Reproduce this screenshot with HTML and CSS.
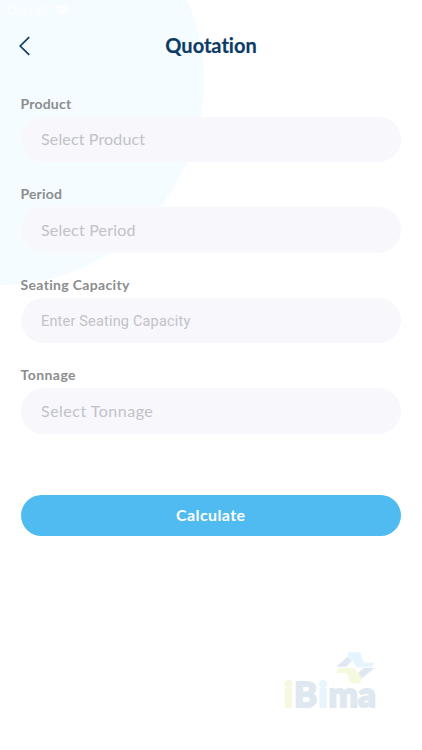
FILE: index.html
```html
<!DOCTYPE html>
<html lang="en">
<head>
<meta charset="utf-8">
<title>Quotation</title>
<link rel="stylesheet" href="styles.css">
</head>
<body>
<main class="screen">
  <div class="status"><span>Carrier</span>
    <svg width="16" height="12" viewBox="0 0 16 12"><path d="M1 4Q8-2 15 4L13 6Q8 2 3 6ZM4 7Q8 4 12 7L8 11Z" fill="currentColor"/></svg>
  </div>
  <header class="header">
    <svg class="back" width="12" height="20" viewBox="0 0 12 20"><path d="M10.2 1.2L1.2 10L10.2 18.8" fill="none" stroke="currentColor" stroke-width="1.7"/></svg>
    <h1 class="title">Quotation</h1>
  </header>
  <form class="form">
    <div class="field"><div class="label product">Product</div><div class="input"><span class="select-product">Select Product</span></div></div>
    <div class="field"><div class="label period">Period</div><div class="input"><span class="select-period">Select Period</span></div></div>
    <div class="field"><div class="label seating">Seating Capacity</div><div class="input entry"><span>Enter Seating Capacity</span></div></div>
    <div class="field"><div class="label tonnage">Tonnage</div><div class="input"><span class="select-tonnage">Select Tonnage</span></div></div>
    <button class="calculate" type="button">Calculate</button>
  </form>
  <footer class="brand">
    <svg class="mark" width="42" height="35" viewBox="195 30 126 105">
      <path d="M234 37H270L283 68H314L305 82H260L246 61L234 52Z" fill="#e6f5fd"/>
      <path d="M199 80L232 50L246 62L228 80Z" fill="#dfe8f0"/>
      <path d="M204 84H252L266 101L277 115L270 130H242L230 99H199Z" fill="#f6f8e0"/>
      <path d="M264 99L281 84H314L276 115Z" fill="#dfe8f0"/>
    </svg>
    <div class="wordmark"><span class="yellow">i</span><span class="cap">B</span><span class="sky">i</span><span class="end">ma</span></div>
  </footer>
</main>
</body>
</html>
```
FILE: styles.css
```css
* { box-sizing: border-box; }
body { margin: 0; background: #fff; font-family: Lato, "Liberation Sans", sans-serif; font-variant-ligatures: none; }
.screen {
  width: 422px; height: 750px; overflow: hidden;
  background: radial-gradient(circle at 0 81px, #f5fcff 203.5px, #fff 204.5px);
}
.status { height: 20px; padding-left: 7px; display: flex; align-items: center; gap: 4px; color: #fdfeff; font: 13px/20px Inter, sans-serif; }
.header { height: 52px; display: grid; grid-template-columns: 41px 340px 41px; align-items: center; color: #0b3b66; }
.back { margin-left: 18.5px; }
.title { margin: -2px 0 0; text-align: center; font-size: 20px; line-height: 24px; font-weight: 700; -webkit-text-stroke: 0.2px currentColor; }
.form { padding: 22.5px 21px 0 20.5px; }
.field { height: 90.6px; }
.label { height: 22px; line-height: 17px; font-size: 14px; font-weight: 700; color: #8b8d8e; white-space: nowrap; }
.product { letter-spacing: 0.2px; }
.period { letter-spacing: 0.15px; }
.seating { letter-spacing: 0.33px; }
.tonnage { line-height: 18px; letter-spacing: 0.45px; }
.input { height: 45.5px; border-radius: 23px; background: #f7f7fc; padding: 0 20.5px 1px; display: flex; align-items: center; color: #c2c2c8; font-size: 16px; white-space: nowrap; }
.select-product { letter-spacing: 0.15px; }
.select-period { letter-spacing: 0.2px; }
.select-tonnage { letter-spacing: 0.5px; }
.entry { padding-bottom: 0; padding-top: 2px; font-family: Roboto, sans-serif; font-size: 14.5px; letter-spacing: 0.18px; }
.calculate { display: block; width: 100%; height: 41px; margin-top: 38px; padding: 0; border: 0; border-radius: 21px; background: #4fbbf1; color: #fff; font: 700 16px/20px Lato, sans-serif; letter-spacing: 0.4px; }
.brand { width: 94px; margin: 114.5px 0 0 284px; }
.mark { display: block; margin-left: 51px; }
.wordmark { display: flex; height: 34px; margin-top: -9px; line-height: 34px; font-size: 35px; font-weight: 900; color: #dfe8f0; -webkit-text-stroke: 2px currentColor; }
.cap { margin: 0 1px; }
.end { margin-left: 1px; }
.yellow { color: #f6f8e0; }
.sky { color: #e6f5fd; }
```
